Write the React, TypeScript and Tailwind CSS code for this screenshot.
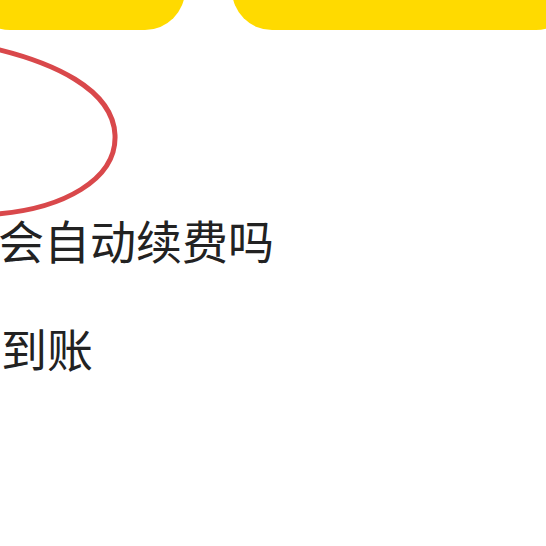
const rows = [
  { text: "会自动续费吗", indent: "-ml-[2px]" },
  { text: "到账", indent: "ml-[1px]" },
  { text: "", indent: "" },
  { text: "如何联系在线客服", indent: "ml-[22px] mt-[3px]" },
];

function CircleMark() {
  return (
    <svg
      className="absolute left-0 top-0 pointer-events-none"
      width="546"
      height="546"
      viewBox="0 0 546 546"
      fill="none"
    >
      <path
        d="M-4 49 C 50 62, 113 88, 115 135 C 117 180, 62 209, -4 214"
        stroke="#D9484B"
        strokeWidth="5"
        strokeLinecap="round"
      />
    </svg>
  );
}

export default function App() {
  return (
    <div
      className="relative w-[546px] h-[546px] overflow-hidden bg-white text-[#222]"
      style={{ fontFamily: '"Noto Sans CJK SC", "Noto Sans", sans-serif' }}
    >
      <div className="flex gap-[47px] -mt-[50px]">
        <div className="w-[215px] h-[80px] -ml-[30px] rounded-[40px] bg-[#FFDA00]" />
        <div className="flex-1 h-[80px] -mr-[30px] rounded-[40px] bg-[#FFDA00]" />
      </div>

      <div className="mt-[155px] flex flex-col">
        {rows.map((row, i) => (
          <div
            key={i}
            className={`h-[108px] shrink-0 leading-[108px] text-[46px] whitespace-nowrap ${row.indent}`}
          >
            {row.text}
          </div>
        ))}
      </div>

      <CircleMark />
    </div>
  );
}
